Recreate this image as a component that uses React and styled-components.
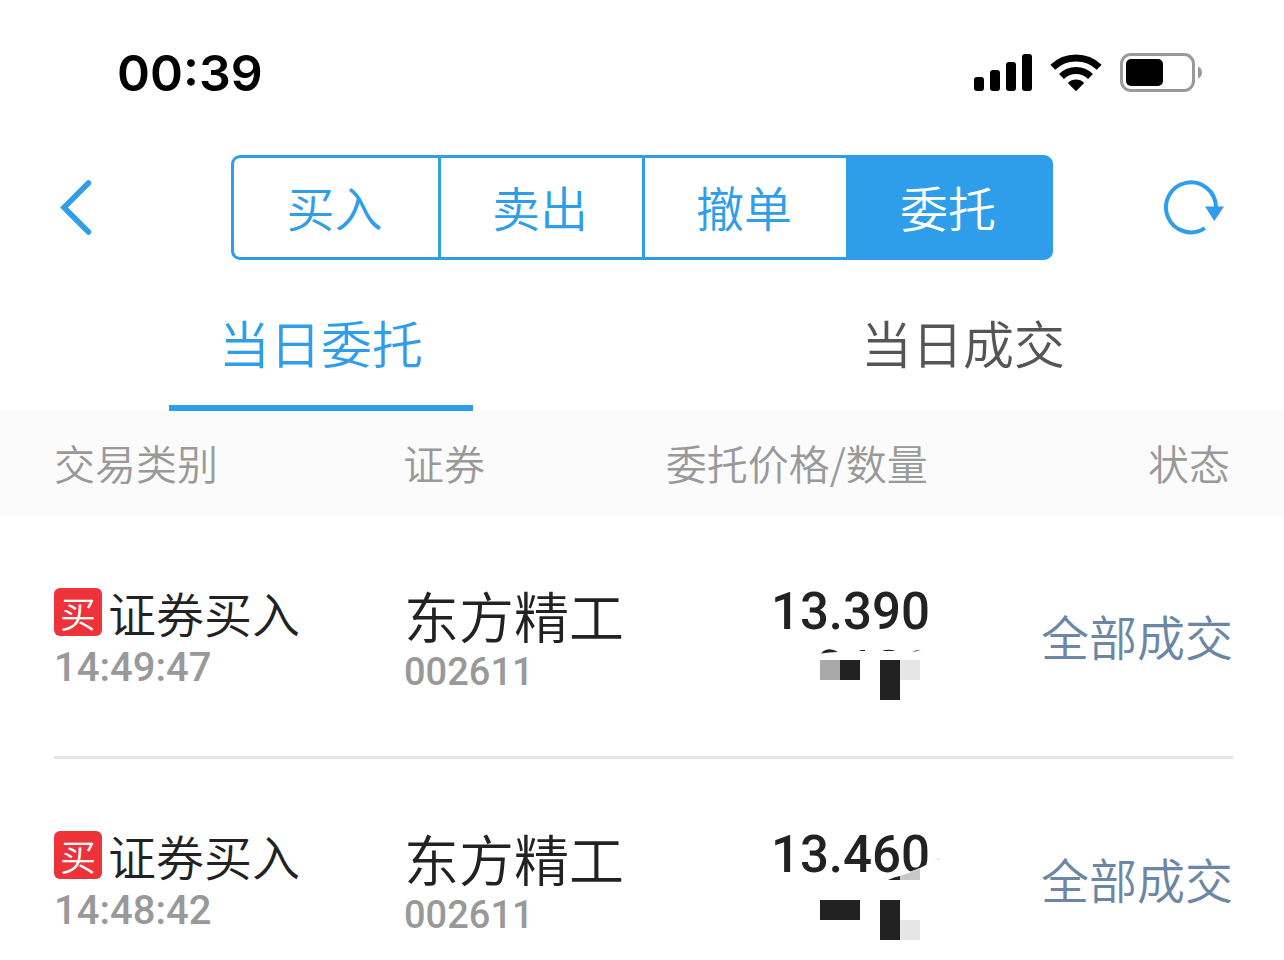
import React from 'react'
import styled, { createGlobalStyle } from 'styled-components'

const actions = ['买入', '卖出', '撤单', '委托']

const tabs = ['当日委托', '当日成交']

const orders = [
  {
    id: 1,
    type: '证券买入',
    time: '14:49:47',
    name: '东方精工',
    code: '002611',
    price: '13.390',
    status: '全部成交',
    Mask: MaskOne,
  },
  {
    id: 2,
    type: '证券买入',
    time: '14:48:42',
    name: '东方精工',
    code: '002611',
    price: '13.460',
    status: '全部成交',
    Mask: MaskTwo,
  },
]

const App = () => {
  return (
    <>
      <GlobalStyle />
      <StatusBar />
      <NavBar />
      <Tabs>
        {tabs.map((tab, index) => {
          return (
            <Tab key={tab} type='button' $active={index === 0}>
              {tab}
            </Tab>
          )
        })}
      </Tabs>
      <OrdersTable />
    </>
  )
}

const StatusBar = () => {
  return (
    <StatusWrapper>
      <Clock>00:39</Clock>
      <StatusIcons>
        <svg width='58' height='38' viewBox='0 0 58 38'>
          <rect x='0' y='23' width='10' height='14' rx='3' />
          <rect x='16' y='16' width='10' height='21' rx='3' />
          <rect x='32' y='8' width='10' height='29' rx='3' />
          <rect x='48' y='0' width='10' height='37' rx='3' />
        </svg>
        <svg width='52' height='38' viewBox='0 0 52 38'>
          <g fill='none' stroke='#000' strokeWidth='7'>
            <path d='M2.8 13.3A33.5 33.5 0 0 1 49.2 13.3' />
            <path d='M11.5 22.5A20.5 20.5 0 0 1 40.5 22.5' />
          </g>
          <path d='M26 37.3L17.8 29A11.6 11.6 0 0 1 34.2 29Z' />
        </svg>
        <svg width='82' height='40' viewBox='0 0 82 40'>
          <rect
            x='1.5'
            y='1.5'
            width='72'
            height='36'
            rx='9.5'
            fill='none'
            stroke='#999'
            strokeWidth='3'
          />
          <rect x='6' y='6' width='37' height='27' rx='5' />
          <path d='M78 13.5C83.3 15 83.3 24 78 25.5Z' fill='#999' />
        </svg>
      </StatusIcons>
    </StatusWrapper>
  )
}

const NavBar = () => {
  return (
    <NavWrapper>
      <IconButton type='button' aria-label='返回'>
        <svg width='34' height='58' viewBox='0 0 34 58'>
          <path
            d='M28.5 4L4 28.5L28.5 53'
            fill='none'
            stroke='#2f9eea'
            strokeWidth='5.500'
            strokeLinecap='round'
          />
        </svg>
      </IconButton>
      <Segments>
        {actions.map((action) => {
          return (
            <Segment key={action} type='button' $active={action === '委托'}>
              {action}
            </Segment>
          )
        })}
      </Segments>
      <IconButton type='button' aria-label='刷新' $end>
        <svg width='60' height='58' viewBox='0 0 60 58'>
          <path
            d='M40.8 49.2A25 25 0 1 1 52 28'
            fill='none'
            stroke='#2f9eea'
            strokeWidth='4'
          />
          <path d='M41 27.5H60L50.3 42Z' fill='#2f9eea' />
        </svg>
      </IconButton>
    </NavWrapper>
  )
}

const OrdersTable = () => {
  return (
    <Table>
      <thead>
        <HeadRow>
          <th>交易类别</th>
          <th>证券</th>
          <RightHead>委托价格/数量</RightHead>
          <RightHead>状态</RightHead>
        </HeadRow>
      </thead>
      <tbody>
        {orders.map((order) => {
          const { id, type, time, name, code, price, status, Mask } = order
          return (
            <Row key={id}>
              <Cell>
                <TypeLine>
                  <Badge>买</Badge>
                  {type}
                </TypeLine>
                <Time>{time}</Time>
              </Cell>
              <Cell>
                <Name>{name}</Name>
                <Code>{code}</Code>
              </Cell>
              <PriceCell>
                <Price>{price}</Price>
                <Mask />
              </PriceCell>
              <Status>{status}</Status>
            </Row>
          )
        })}
      </tbody>
    </Table>
  )
}

// hidden quantities
function MaskOne() {
  return (
    <Mosaic width='180' height='110' viewBox='0 0 180 110'>
      <g fill='#222'>
        <path d='M61 57.5Q68 50 78 56Q69 56 61 57.5Z' />
        <path d='M99 55L101 54H105V55Z' />
        <path d='M122 55Q128 52.5 136 55Z' />
        <path d='M152 56Q155 54 161 54L157 55Z' />
        <rect x='80' y='64' width='20' height='20' />
        <rect x='120' y='64' width='20' height='40' />
      </g>
      <rect x='60' y='64' width='20' height='20' fill='#a9a9a9' />
      <rect x='140' y='64' width='20' height='20' fill='#e6e6e6' />
    </Mosaic>
  )
}

function MaskTwo() {
  return (
    <Mosaic width='180' height='110' viewBox='0 0 180 110'>
      <path d='M128 41L160 29L180 19V41Z' fill='#fff' />
      <path d='M128 41Q134 38 140 37V41Z' fill='#222' />
      <path d='M140 37Q150 34 160 29V41H140Z' fill='#c8c8c8' />
      <path d='M173 20L180 19V21Z' fill='#e6e6e6' />
      <rect x='60' y='61' width='40' height='20' fill='#222' />
      <rect x='120' y='61' width='20' height='40' fill='#222' />
      <rect x='140' y='81' width='20' height='20' fill='#e6e6e6' />
    </Mosaic>
  )
}

const GlobalStyle = createGlobalStyle`
  * {
    box-sizing: border-box;
    margin: 0;
    padding: 0;
  }
  body {
    background: #fff;
    color: #222;
    font-family: 'Noto Sans CJK SC', sans-serif;
    font-weight: 350;
    overflow-x: hidden;
  }
  button {
    border: none;
    background: none;
    font: inherit;
    cursor: pointer;
  }
  svg {
    display: block;
  }
`

const StatusWrapper = styled.header`
  display: flex;
  align-items: center;
  justify-content: space-between;
  height: 146px;
  padding: 0 82px 0 117px;
`

const Clock = styled.time`
  color: #000;
  font-family: Inter, sans-serif;
  font-size: 50px;
  font-weight: 600;
`

const StatusIcons = styled.div`
  display: flex;
  align-items: center;
  gap: 18px;
`

const NavWrapper = styled.nav`
  display: grid;
  grid-template-columns: 1fr 64% 1fr;
  align-items: center;
  padding-top: 9px;
`

const IconButton = styled.button`
  justify-self: ${(props) => (props.$end ? 'end' : 'start')};
  margin: 0 60px;
`

const Segments = styled.div`
  display: grid;
  grid-template-columns: repeat(4, 1fr);
  height: 105px;
  border: 3px solid #2f9eea;
  border-radius: 9px;
  background: #2f9eea;
  overflow: hidden;
`

const Segment = styled.button`
  padding: 0 3px 3px 0;
  background: ${(props) => (props.$active ? '#2f9eea' : '#fff')};
  color: ${(props) => (props.$active ? '#fff' : '#2f9eea')};
  font-size: 48px;
  line-height: 72px;
  & + & {
    border-left: 3px solid #2f9eea;
  }
`

const Tabs = styled.div`
  display: grid;
  grid-template-columns: 1fr 1fr;
  justify-items: center;
`

const Tab = styled.button`
  width: 304px;
  height: 151px;
  padding-top: 18px;
  border-bottom: 6px solid
    ${(props) => (props.$active ? '#2f9eea' : 'transparent')};
  color: ${(props) => (props.$active ? '#2f9eea' : '#555')};
  font-size: 51px;
`

const Table = styled.table`
  display: block;
  thead,
  tbody {
    display: block;
  }
`

const HeadRow = styled.tr`
  display: grid;
  grid-template-columns: 350fr 240fr 286fr 303fr;
  align-items: center;
  height: 105px;
  padding: 0 54px 3px;
  background: #fbfbfb;
  color: #999;
  font-size: 41px;
  th {
    font-weight: inherit;
    text-align: left;
    white-space: nowrap;
  }
`

const RightHead = styled.th`
  && {
    justify-self: end;
  }
`

const Row = styled.tr`
  display: grid;
  grid-template-columns: 350fr 240fr 286fr 303fr;
  height: 243px;
  margin: 0 51px 0 54px;
  border-bottom: 3px solid #e6e6e6;
`

const Cell = styled.td`
  padding-top: 60px;
  white-space: nowrap;
`

const TypeLine = styled.div`
  display: flex;
  align-items: center;
  gap: 6px;
  height: 72px;
  font-size: 48px;
  line-height: 72px;
`

const Badge = styled.span`
  width: 48px;
  height: 48px;
  border-radius: 6px;
  background: #ee3239;
  color: #fff;
  font-size: 36px;
  line-height: 48px;
  text-align: center;
`

const Name = styled.div`
  font-size: 55px;
  line-height: 76px;
`

const Time = styled.div`
  color: #999;
  font-family: Roboto, sans-serif;
  font-size: 40px;
  font-weight: 500;
  line-height: 40px;
`

const Code = styled(Time)`
  font-size: 38px;
`

const PriceCell = styled(Cell)`
  position: relative;
  text-align: right;
`

const Price = styled.div`
  font-family: Roboto, sans-serif;
  font-size: 51px;
  font-weight: 500;
  line-height: 72px;
`

const Mosaic = styled.svg`
  position: absolute;
  top: 80px;
  right: -10px;
`

const Status = styled.td`
  align-self: center;
  padding-bottom: 3px;
  color: #6b87a5;
  font-size: 48px;
  text-align: right;
  white-space: nowrap;
`

export default App
